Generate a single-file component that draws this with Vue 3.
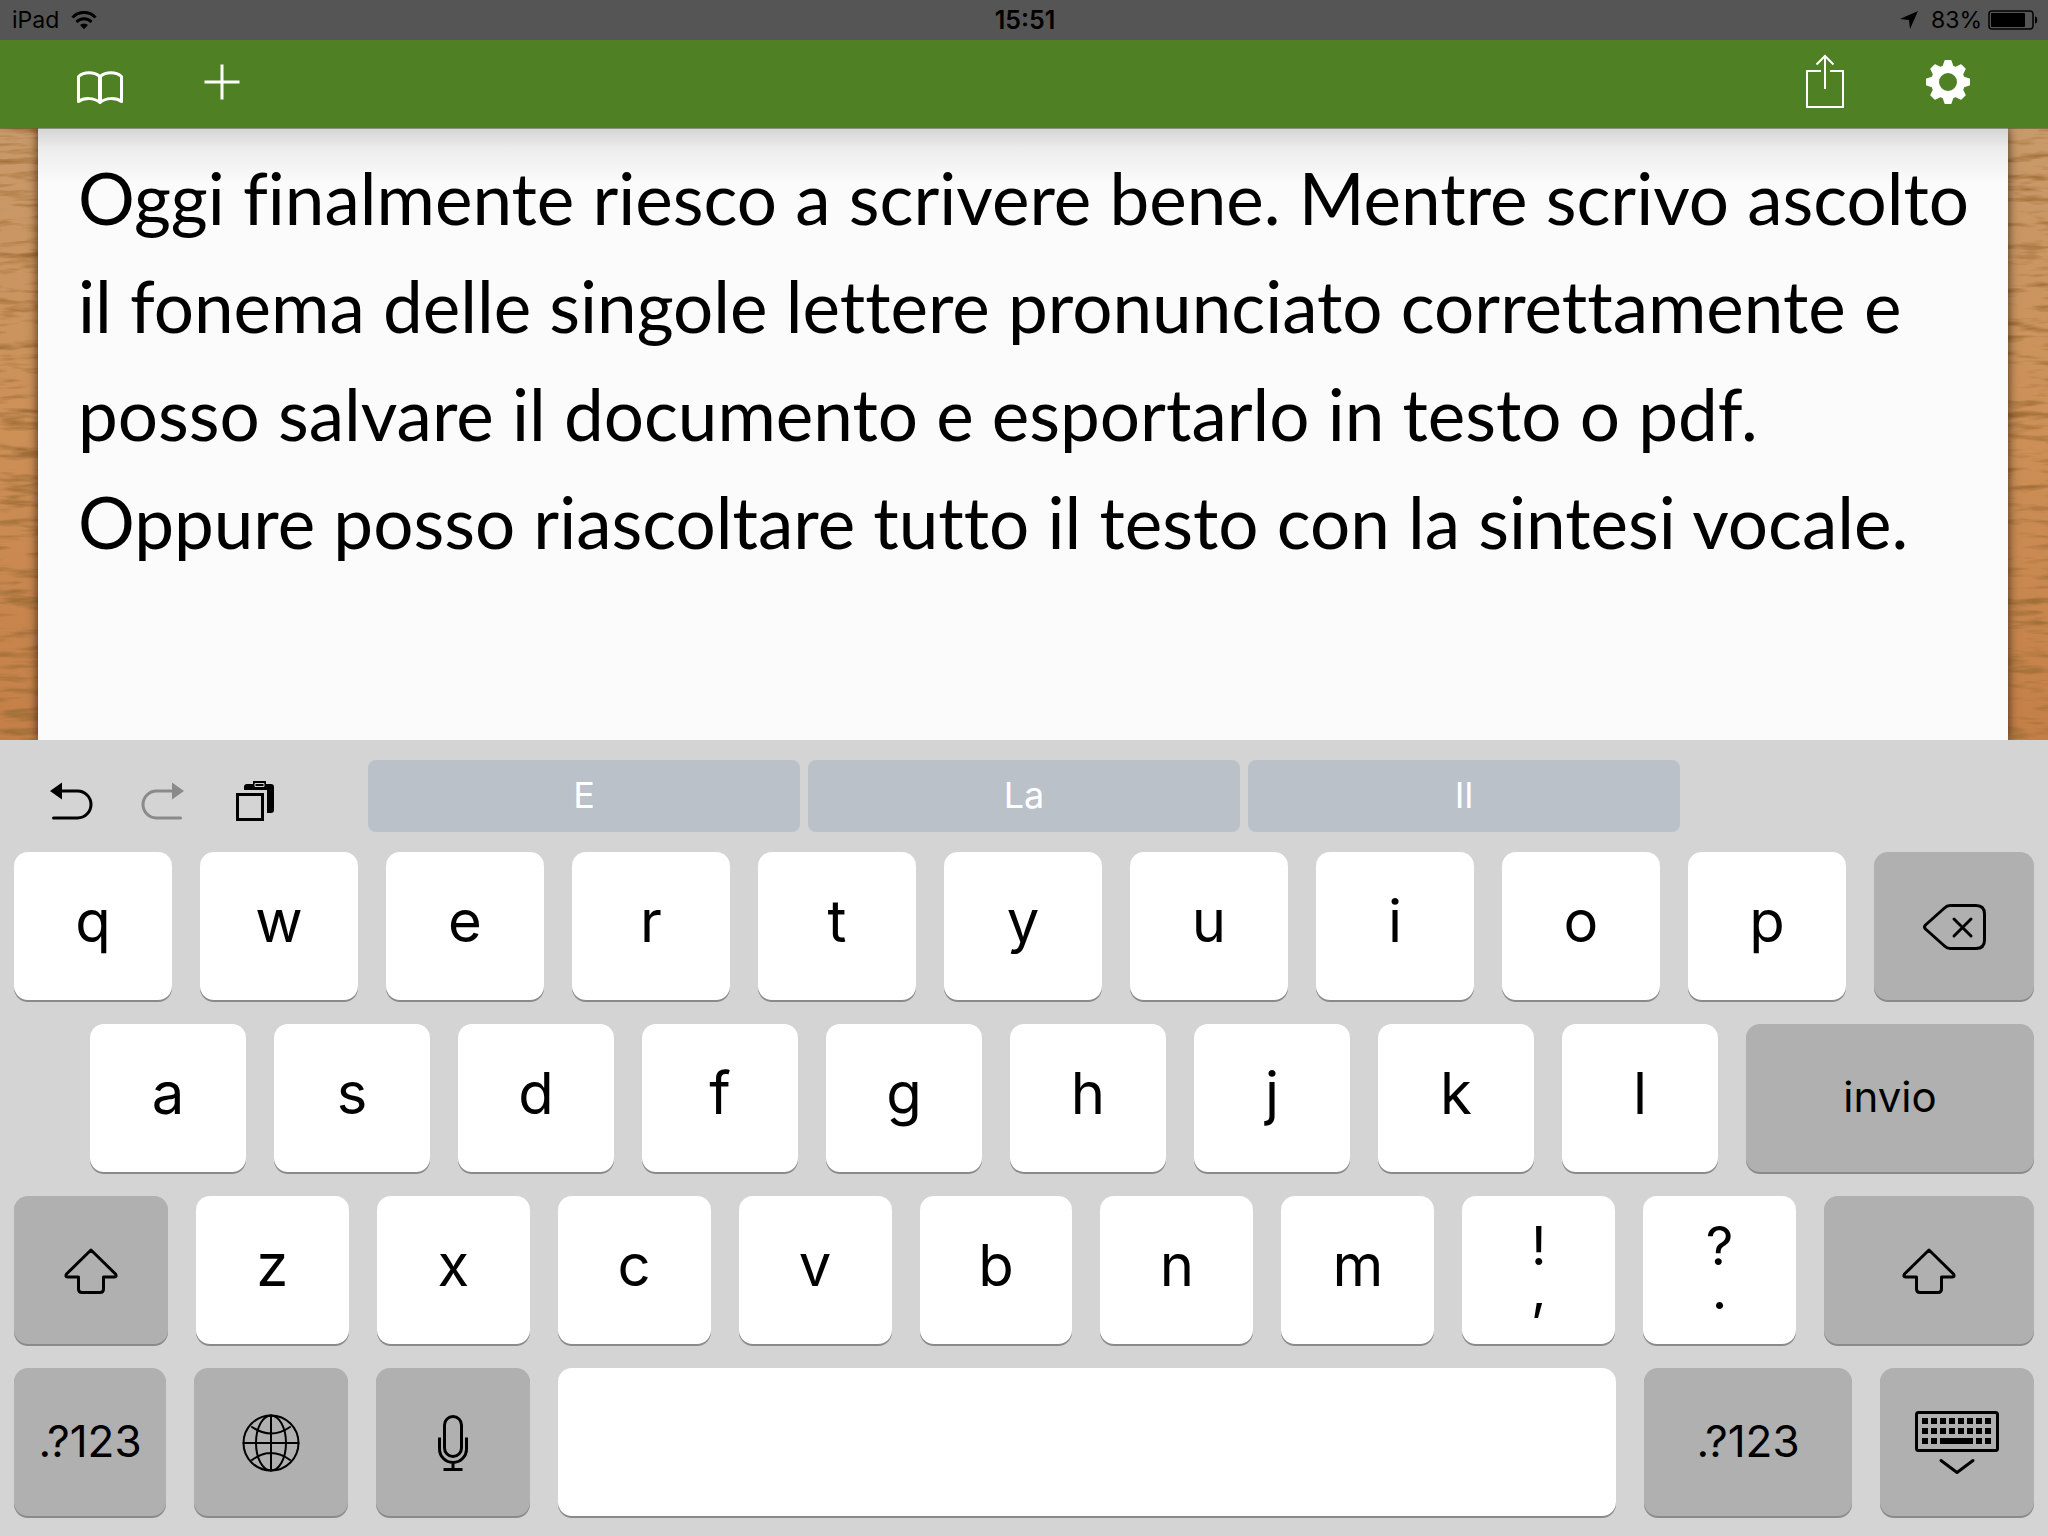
<script setup>
import { ref } from 'vue'

const text = ref(
  [
    'Oggi finalmente riesco a scrivere bene. Mentre scrivo ascolto',
    'il fonema delle singole lettere pronunciato correttamente e',
    'posso salvare il documento e esportarlo in testo o pdf.',
    'Oppure posso riascoltare tutto il testo con la sintesi vocale.'
  ].join('\n')
)

const suggestions = ['E', 'La', 'Il']

const letters = (chars, size) => chars.split('').map((c) => ({ id: c, label: c, size }))

// size is the relative width of a key inside its row
const rows = [
  {
    id: 'top',
    keys: [
      ...letters('qwertyuiop', 158),
      { id: 'backspace', icon: 'backspace', size: 160, kind: 'dark', title: 'Cancella' }
    ]
  },
  {
    id: 'home',
    keys: [
      ...letters('asdfghjkl', 156),
      { id: 'enter', label: 'invio', size: 288, kind: 'dark', text: 'word' }
    ]
  },
  {
    id: 'bottom',
    keys: [
      { id: 'shift-left', icon: 'shift', size: 154, kind: 'dark', title: 'Maiuscole' },
      ...letters('zxcvbnm', 153),
      { id: 'comma', upper: '!', label: ',', size: 153, text: 'double' },
      { id: 'period', upper: '?', label: '.', size: 153, text: 'double' },
      { id: 'shift-right', icon: 'shift', size: 210, kind: 'dark', title: 'Maiuscole' }
    ]
  },
  {
    id: 'space',
    keys: [
      { id: 'numbers-left', label: '.?123', size: 152, kind: 'dark', text: 'number' },
      { id: 'globe', icon: 'globe', size: 154, kind: 'dark', title: 'Lingua' },
      { id: 'mic', icon: 'mic', size: 154, kind: 'dark', title: 'Dettatura' },
      { id: 'spacebar', size: 1058, title: 'Spazio' },
      { id: 'numbers-right', label: '.?123', size: 208, kind: 'dark', text: 'number' },
      { id: 'hide', icon: 'hide', size: 154, kind: 'dark', title: 'Nascondi tastiera' }
    ]
  }
]

const icons = {
  backspace: { width: 64, height: 48 },
  shift: { width: 54, height: 46 },
  globe: { width: 58, height: 58 },
  mic: { width: 30, height: 58 },
  hide: { width: 84, height: 64 }
}

// small squares of the hide-keyboard icon
const dots = []
for (let row = 0; row < 3; row++) {
  for (let col = 0; col < 8; col++) {
    if (row === 2 && col > 1 && col < 6) continue
    dots.push({ x: 7 + col * 9, y: 7 + row * 10 })
  }
}

const teeth = [0, 45, 90, 135, 180, 225, 270, 315]
</script>

<template>
  <div class="app">
    <div class="status">
      <div class="status__side">
        <span>iPad</span>
        <svg width="26" height="20" viewBox="0 0 26 20" fill="none" stroke="#000" stroke-width="3">
          <path d="M1.500 7.500a16 16 0 0 1 23 0" />
          <path d="M5.500 12a10.500 10.500 0 0 1 15 0" />
          <path d="M9 15a6 6 0 0 1 8 0L13 19.200z" fill="#000" stroke="none" />
        </svg>
      </div>
      <span class="status__time">15:51</span>
      <div class="status__side status__side--right">
        <svg class="status__location" width="20" height="20" viewBox="0 0 20 20">
          <path d="M19 1L11 19L10 10L1 9z" />
        </svg>
        <span>83%</span>
        <svg width="50" height="20" viewBox="0 0 50 20">
          <rect x="1" y="1" width="44" height="18" rx="3" fill="none" stroke="#000" stroke-width="1.500" />
          <rect x="3" y="3" width="34" height="14" rx="1" />
          <path d="M47 6.500c3 0 3 7 0 7z" />
        </svg>
      </div>
    </div>

    <header class="toolbar">
      <button class="toolbar__button toolbar__button--book" type="button" aria-label="Documenti">
        <svg width="48" height="34" viewBox="0 0 48 34" fill="none" stroke="#fff" stroke-width="3" stroke-linejoin="round">
          <path d="M24 5.500C18 0.500 8 0.500 2.500 5.500V30.500C8 26.500 18 26.500 24 31.500C30 26.500 40 26.500 45.500 30.500V5.500C40 0.500 30 0.500 24 5.500z" />
          <path d="M24 5V31" stroke-width="4" />
        </svg>
      </button>
      <button class="toolbar__button toolbar__button--add" type="button" aria-label="Nuovo">
        <svg width="36" height="36" viewBox="0 0 36 36" stroke="#fff" stroke-width="3">
          <path d="M18 0.500V35.500M0.500 18H35.500" />
        </svg>
      </button>
      <button class="toolbar__button toolbar__button--share" type="button" aria-label="Condividi">
        <svg width="40" height="56" viewBox="0 0 40 56" fill="none" stroke="#fff" stroke-width="2">
          <path d="M15 17H1V53H37V17H24M19 2V35M10.500 10.500L19 2L27.500 10.500" />
        </svg>
      </button>
      <button class="toolbar__button" type="button" aria-label="Impostazioni">
        <svg width="44" height="44" viewBox="-22 -22 44 44">
          <g fill="#fff">
            <path
              v-for="angle in teeth"
              :key="angle"
              d="M-6 -14L-3.500 -21.500Q-3.300 -22 -2.500 -22H2.500Q3.300 -22 3.500 -21.500L6 -14z"
              :transform="`rotate(${angle})`"
            />
          </g>
          <circle r="13" fill="none" stroke="#fff" stroke-width="8" />
        </svg>
      </button>
    </header>

    <main class="desk">
      <svg class="desk__wood" width="100%" height="100%" aria-hidden="true">
        <filter id="grain" x="0" y="0" width="100%" height="100%">
          <feTurbulence type="fractalNoise" baseFrequency="0.022 0.13" numOctaves="3" seed="8" />
          <feColorMatrix values="0 0 0 0 0.360  0 0 0 0 0.160  0 0 0 0 0.040  3 0 0 0 -1.450" />
        </filter>
        <rect width="100%" height="100%" filter="url(#grain)" />
      </svg>
      <div class="desk__sheet">
        <textarea v-model="text" class="desk__text" rows="4" spellcheck="false" aria-label="Documento" />
      </div>
    </main>

    <section class="keyboard">
      <div class="assist">
        <div class="assist__tools">
          <button type="button" aria-label="Annulla">
            <svg width="44" height="40" viewBox="0 0 44 40" fill="none" stroke="#000" stroke-width="3" stroke-linecap="round">
              <path d="M11 10H28.500a13.500 13.500 0 0 1 0 27H4.500" />
              <path d="M1 10L13 1.500V18.500z" fill="#000" stroke="none" />
            </svg>
          </button>
          <button type="button" aria-label="Ripeti" disabled>
            <svg width="44" height="40" viewBox="0 0 44 40" fill="none" stroke="#8a8a8a" stroke-width="3" stroke-linecap="round">
              <path d="M33 10H15.500a13.500 13.500 0 0 0 0 27H39.500" />
              <path d="M43 10L31 1.500V18.500z" fill="#8a8a8a" stroke="none" />
            </svg>
          </button>
          <button type="button" aria-label="Incolla">
            <svg width="44" height="42" viewBox="-2 0 44 42">
              <path d="M9 10V7Q9 4 12 4H18V1H31V4H36Q39 4 39 7V30Q39 33 36 33H32V10z" />
              <path d="M20 3.500H29V6.500H20z" fill="none" stroke="#d4d4d4" />
              <rect x="2.500" y="14.500" width="25" height="25" fill="none" stroke="#000" stroke-width="3" />
            </svg>
          </button>
        </div>
        <div class="assist__words">
          <button v-for="word in suggestions" :key="word" type="button" class="assist__word">
            {{ word }}
          </button>
        </div>
      </div>

      <div v-for="row in rows" :key="row.id" :class="['row', `row--${row.id}`]">
        <button
          v-for="key in row.keys"
          :key="key.id"
          type="button"
          :aria-label="key.title"
          :class="['key', key.kind && `key--${key.kind}`, key.text && `key--${key.text}`]"
          :style="{ flexGrow: key.size }"
        >
          <svg
            v-if="key.icon"
            :width="icons[key.icon].width"
            :height="icons[key.icon].height"
            :viewBox="`0 0 ${icons[key.icon].width} ${icons[key.icon].height}`"
            fill="none"
            stroke="#000"
            stroke-width="3"
            stroke-linecap="round"
            stroke-linejoin="round"
          >
            <template v-if="key.icon === 'backspace'">
              <path d="M28 2.500H54Q62.500 2.500 62.500 11V37Q62.500 45.500 54 45.500H28Q25 45.500 22.500 43L3.500 26Q1.500 24 3.500 22L22.500 5Q25 2.500 28 2.500z" />
              <path d="M32 16L49 33M49 16L32 33" />
            </template>
            <template v-else-if="key.icon === 'shift'">
              <path d="M27 2L51.500 26Q53 29 50.500 29H39.500V41Q39.500 44.500 36 44.500H18Q14.500 44.500 14.500 41V29H3.500Q1 29 2.500 26z" />
            </template>
            <g v-else-if="key.icon === 'globe'" stroke-width="2">
              <circle cx="29" cy="29" r="27.500" />
              <ellipse cx="29" cy="29" rx="15" ry="27.500" />
              <path d="M29 1.500V56.500M1.500 29H56.500M10 13Q29 26 48 13M10 46Q29 32 48 46" />
            </g>
            <template v-else-if="key.icon === 'mic'">
              <rect x="6.500" y="2.500" width="17" height="40" rx="8.500" />
              <path d="M1.500 25V35a13.500 13.500 0 0 0 27 0V25M15 48.500V55M7 55.500H23" stroke-linecap="square" />
            </template>
            <template v-else>
              <rect x="1.500" y="1.500" width="81" height="38" rx="2" />
              <g fill="#000" stroke="none">
                <rect v-for="dot in dots" :key="`${dot.x}-${dot.y}`" :x="dot.x" :y="dot.y" width="6" height="6" />
                <rect x="25" y="27" width="33" height="6" />
              </g>
              <path d="M26 49.500L42 61.500L58 49.500" />
            </template>
          </svg>
          <span v-if="key.upper">{{ key.upper }}</span>
          <span v-if="key.label">{{ key.label }}</span>
        </button>
      </div>
    </section>
  </div>
</template>

<style>
body {
  margin: 0;
}
</style>

<style scoped>
.app {
  display: flex;
  flex-direction: column;
  min-height: 100vh;
  font-family: Inter, 'Liberation Sans', sans-serif;
  color: #000;
}

button {
  display: flex;
  align-items: center;
  justify-content: center;
  padding: 0;
  border: 0;
  background: none;
  color: inherit;
  font: inherit;
}

svg {
  display: block;
  flex: none;
}

.status {
  display: grid;
  grid-template-columns: 1fr auto 1fr;
  align-items: center;
  height: 40px;
  padding: 0 10px 0 12px;
  background: #555;
  font-size: 23px;
}

.status__side {
  display: flex;
  align-items: center;
  gap: 12px;
}

.status__side--right {
  justify-content: flex-end;
  gap: 6px;
}

.status__location {
  margin-right: 6px;
}

.status__time {
  font-size: 25px;
  font-weight: 600;
}

.toolbar {
  position: relative;
  z-index: 1;
  display: flex;
  align-items: center;
  height: 88px;
  padding: 0 78px 0 76px;
  background: #4f8124;
  box-shadow: 0 1px 0 rgba(60, 80, 40, 0.5);
}

.toolbar__button {
  padding-bottom: 4px;
}

.toolbar__button--book {
  padding: 8px 0 0;
}

.toolbar__button--add {
  margin-left: 80px;
}

.toolbar__button--share {
  margin: 0 80px 0 auto;
}

.desk {
  position: relative;
  display: flex;
  flex: 1;
  padding: 0 40px 0 38px;
  background: linear-gradient(#c89a6a, #cd9057 50%, #c47f47);
  overflow: hidden;
}

.desk__wood {
  position: absolute;
  inset: 0;
}

.desk__sheet {
  position: relative;
  flex: 1;
  padding: 16px 16px 16px 40px;
  background: linear-gradient(#d4d4d4, #ececec 20px, #fbfbfb 56px);
  box-shadow: 0 0 10px rgba(0, 0, 0, 0.7);
}

.desk__text {
  display: block;
  box-sizing: border-box;
  width: 100%;
  padding: 0;
  border: 0;
  outline: 0;
  background: none;
  color: #000;
  font-family: Lato, 'Liberation Sans', sans-serif;
  font-size: 71px;
  font-variant-ligatures: none;
  line-height: 108px;
  resize: none;
  overflow: hidden;
}

.keyboard {
  padding-bottom: 20px;
  background: #d4d4d4;
}

.assist {
  display: grid;
  grid-template-columns: 23fr 82fr 23fr;
  padding: 20px 0;
}

.assist__tools {
  display: flex;
  align-items: center;
  gap: 48px;
  padding: 10px 0 0 49px;
}

.assist__words {
  display: flex;
  gap: 8px;
}

.assist__word {
  flex: 1;
  height: 72px;
  padding-bottom: 2px;
  border-radius: 8px;
  background: #bac1c9;
  color: #fff;
  font-size: 36px;
}

.row {
  display: flex;
  gap: 28px;
  padding: 0 14px;
}

.row + .row {
  margin-top: 24px;
}

.row--home {
  padding-left: 90px;
}

.key {
  flex: 1 1 0;
  height: 148px;
  padding-bottom: 10px;
  border-radius: 14px;
  background: #fff;
  box-shadow: 0 2px 0 #8a8a8a;
  font-size: 58px;
  line-height: 72px;
}

.key--dark {
  padding: 2px 0 0;
  background: #b0b0b0;
}

.key--word {
  padding: 0 0 2px;
  font-size: 42px;
}

.key--number {
  padding: 0 0 2px;
  font-size: 44px;
}

.key--double {
  flex-direction: column;
  padding-bottom: 4px;
  font-size: 54px;
  line-height: 44px;
}
</style>
